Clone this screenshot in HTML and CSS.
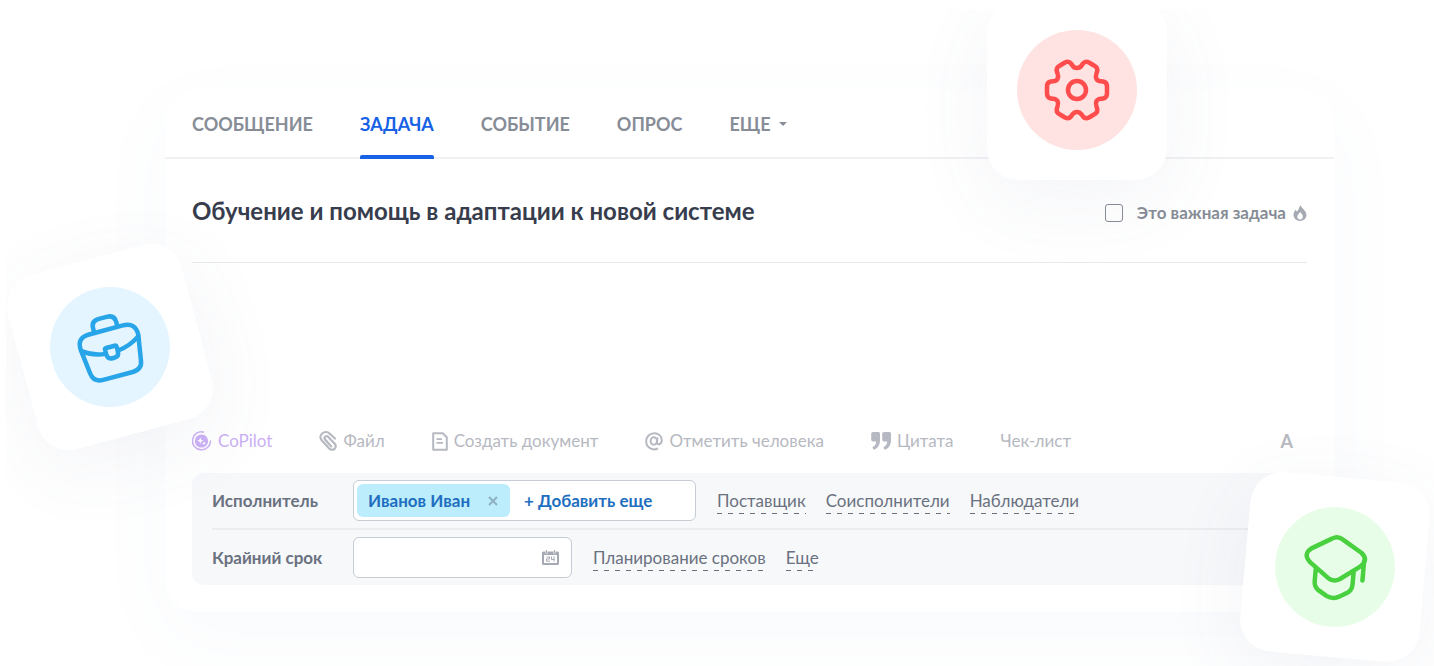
FILE: index.html
```html
<!DOCTYPE html>
<html lang="ru">
<head>
<meta charset="utf-8">
<title>Новая задача</title>
<link rel="stylesheet" href="styles.css">
</head>
<body>
<div class="scene">
  <main class="card">
    <nav class="tabs">
      <button class="tab" type="button">СООБЩЕНИЕ</button>
      <button class="tab tab-active" type="button">ЗАДАЧА</button>
      <button class="tab" type="button">СОБЫТИЕ</button>
      <button class="tab" type="button">ОПРОС</button>
      <button class="tab" type="button">ЕЩЕ <svg class="caret" width="8" height="4" viewBox="0 0 8 4"><path d="M0 0h8L4 4z"/></svg></button>
    </nav>
    <form class="task">
      <header class="task-head">
        <h1 class="title">Обучение и помощь в адаптации к новой системе</h1>
        <label class="important"><input class="check" type="checkbox">Это важная задача
          <svg class="flame" width="14" height="16" viewBox="0 0 14 16"><path fill-rule="evenodd" d="M7.500 0C8 3 13.500 5.500 13.500 10a6.500 6 0 0 1-13 0C.5 8 1.500 6 2.800 4.800 3 6 3.500 6.500 4.200 6.500 5.500 5 6 2.500 7.500 0zM7.200 6.800C6.500 8.600 4.300 9.400 4.300 11.600a2.800 2.800 0 0 0 5.600 0C9.900 9.600 8 8.800 7.200 6.800z"/></svg>
        </label>
      </header>
      <textarea class="description" aria-label="Описание задачи"></textarea>
      <div class="tools">
        <button class="tool tool-copilot" type="button">
          <svg width="20" height="20" viewBox="0 0 20 20"><circle cx="9.500" cy="10" r="6.600" fill="currentColor"/><path d="M12 1.200A9 9 0 1 0 18.500 9.500" fill="none" stroke="currentColor" stroke-width="1.500"/><path d="M8.300 6.500l.9 2.300 2.300.9-2.300.9-.9 2.300-.9-2.300-2.300-.9 2.300-.9zM12 10.300l.6 1.400 1.400.6-1.400.6-.6 1.400-.6-1.400-1.400-.6 1.400-.6z" fill="#fff"/></svg>
          CoPilot</button>
        <button class="tool" type="button">
          <svg width="18" height="20" viewBox="0 0 18 20"><path d="M16 7.500L10.800 2.700C8.600.7 5.400.6 3.200 2.500S.9 7.200 2.700 9.300l7.500 8.100c1.500 1.600 3.900 1.700 5.400.4s1.500-3.600.1-5.100L9.300 5.900c-.9-.9-2.200-1-3.100-.2s-.9 2-.1 2.900l6.200 6.800" fill="none" stroke="currentColor" stroke-width="2.200" stroke-linecap="round"/></svg>
          Файл</button>
        <button class="tool" type="button">
          <svg width="16" height="19" viewBox="0 0 16 19"><path d="M1.200 1.200h9.600l4 4v12.600H1.200z" fill="none" stroke="currentColor" stroke-width="2" stroke-linejoin="round"/><path d="M4.500 7.200h5.500M4.500 10.800h6.500" stroke="currentColor" stroke-width="1.800"/></svg>
          Создать документ</button>
        <button class="tool" type="button">
          <svg width="18" height="19" viewBox="0 0 18 19"><g fill="none" stroke="currentColor" stroke-width="2"><ellipse cx="8.800" cy="9" rx="3.200" ry="3.700"/><path d="M12.500 5.300l-.6 5c-.2 3 4.900 2.700 4.900-2.100C16.800 4 13.500 1.200 9.300 1.200 4.700 1.200 1.200 4.700 1.200 9.300c0 6.200 6 9.800 11.700 7.200"/></g></svg>
          Отметить человека</button>
        <button class="tool" type="button">
          <svg width="20" height="18" viewBox="0 0 20 18"><path d="M2 0h5.500a1.500 1.500 0 0 1 1.500 1.500V8c0 5-2.200 8.600-6.600 9.800L1.500 15c2.300-1 3.600-2.500 3.700-5.500H2A1.800 1.800 0 0 1 .2 7.700V1.800A1.800 1.800 0 0 1 2 0zM13 0h5.500A1.500 1.500 0 0 1 20 1.500V8c0 5-2.200 8.600-6.600 9.800l-.9-2.800c2.300-1 3.600-2.500 3.700-5.500H13a1.800 1.800 0 0 1-1.800-1.800V1.800A1.800 1.800 0 0 1 13 0z" fill="currentColor"/></svg>
          Цитата</button>
        <button class="tool" type="button">Чек-лист</button>
        <button class="tool tool-format" type="button">A</button>
      </div>
      <div class="panel">
        <div class="row">
          <label class="row-label" for="add">Исполнитель</label>
          <div class="people">
            <span class="chip">Иванов Иван
              <button class="chip-close" type="button" aria-label="Удалить"><svg width="10" height="10" viewBox="0 0 10 10"><path d="M1 1l8 8M9 1L1 9" stroke="currentColor" stroke-width="2"/></svg></button>
            </span>
            <button class="add" id="add" type="button">+ Добавить еще</button>
          </div>
          <div class="links"><a class="link" href="#">Поставщик</a><a class="link" href="#">Соисполнители</a><a class="link" href="#">Наблюдатели</a></div>
        </div>
        <div class="row">
          <label class="row-label" for="due">Крайний срок</label>
          <div class="date">
            <input class="date-input" id="due" type="text">
            <svg width="17" height="15" viewBox="0 0 17 15"><path d="M1.500 1.500h2v2h2v-2h6v2h2v-2h2A1.500 1.500 0 0 1 17 3v10.500a1.500 1.500 0 0 1-1.500 1.500h-14A1.500 1.500 0 0 1 0 13.500V3a1.500 1.500 0 0 1 1.500-1.500zM2 5v8h13V5z" fill="currentColor" fill-rule="evenodd"/><path d="M4 0h1v3H4zM12 0h1v3h-1z" fill="currentColor"/><path d="M4.500 7h3v2h-3v2.200H8M9.500 6.500v3h3M12 6.500v5" fill="none" stroke="currentColor" stroke-width="1"/></svg>
          </div>
          <div class="links"><a class="link" href="#">Планирование сроков</a><a class="link" href="#">Еще</a></div>
        </div>
      </div>
    </form>
  </main>
  <div class="tile tile-gear">
    <svg viewBox="0 0 120 120"><circle cx="60" cy="60" r="60" fill="#ffe2e2"/><g fill="none" stroke="#ff4d4d" stroke-width="4.500" stroke-linejoin="round"><circle cx="60" cy="60" r="9"/><path d="M54 33.500C56 36 56 38 60 38S64 36 66 33.500C68 31 70 31.500 72 32.500L77 35.500C80 37 81 39 80 42C79 45 78 46 79.500 49C81.500 52 83 51 86 51.500C89 52 90 54 90 56.500V63.500C90 66 89 68 86 68.500C83 69 81.500 68 79.500 71C78 74 79 75 80 78C81 81 80 83 77 84.500L72 87.500C70 88.500 68 89 66 86.500C64 84 64 82 60 82S56 84 54 86.500C52 89 50 88.500 48 87.500L43 84.500C40 83 39 81 40 78C41 75 42 74 40.500 71C38.500 68 37 69 34 68.500C31 68 30 66 30 63.500V56.500C30 54 31 52 34 51.500C37 51 38.500 52 40.500 49C42 46 41 45 40 42C39 39 40 37 43 35.500L48 32.500C50 31.500 52 31 54 33.500Z"/></g></svg>
  </div>
  <div class="tile tile-case">
    <svg viewBox="0 0 120 120"><circle cx="60" cy="60" r="60" fill="#e4f5ff"/><g fill="none" stroke="#27a5e8" stroke-width="4.500" stroke-linejoin="round" stroke-linecap="round"><path d="M43 42.500h35q13 0 12.500 13l-4 25q-1 9.500-11 9.500H45q-10 0-11-9.500l-3-25q-1-13 12-13z"/><path d="M48.500 41.500v-4q0-7.500 8-7.500h8q8 0 8 7.500v4M32 57q9 7 22 8.500M90 57q-10 7-23 8.500"/><path d="M56 60h9q1.500 0 1.500 1.500V66q0 5.500-5 5.500h-2q-5 0-5-5.500v-4.500q0-1.500 1.500-1.500z"/></g></svg>
  </div>
  <div class="tile tile-cap">
    <svg viewBox="0 0 120 120"><circle cx="60" cy="60" r="60" fill="#e8fde8"/><g fill="none" stroke="#48d03e" stroke-width="4.500" stroke-linejoin="round" stroke-linecap="round"><path d="M54.500 32q5.500-3.500 11 0L85 43.500q8.500 6.500 0 14L66 71.500q-6 4-12 0L35 57.500q-8.500-7.500 0-14zM41 63v13q0 5.500 4.500 8.500l8.500 5q6 3 12 0l8.500-5q4.500-3 4.500-8.500V62M88.500 51v20"/></g></svg>
  </div>
</div>
</body>
</html>
```
FILE: styles.css
```css
* { box-sizing: border-box; }
body { margin: 0; background: #fff; font-family: Lato, "Noto Sans", sans-serif; font-size: 17px; line-height: 24px; color: #6a7180; }
button, input, textarea { font: inherit; color: inherit; border: 0; background: none; padding: 0; margin: 0; }
svg { flex: none; display: block; }
.scene { position: relative; overflow: hidden; margin: 9px 0 0 6px; padding: 81px 100px 54px 159px; }
.card { background: #fff; border-radius: 32px; box-shadow: 0 24px 80px rgba(80, 120, 170, .04); }
.tabs { display: flex; gap: 47px; padding: 0 27px; border-bottom: 2px solid #f0f1f3; }
.tab { display: flex; align-items: center; gap: 8px; height: 69px; margin-bottom: -2px; padding-bottom: 2px; font-size: 18px; font-weight: 700; color: #878d97; }
.tab-active { color: #1762e5; position: relative; }
.tab-active::after { content: ""; position: absolute; left: 0; right: 0; bottom: 0; height: 4px; background: #1762e5; border-radius: 2px 2px 0 0; }
.caret { fill: #878d97; }
.task { padding: 0 27px 27px; }
.task-head { display: flex; justify-content: space-between; align-items: center; height: 104px; border-bottom: 1px solid #e9eaed; }
.title { margin: 0; font-size: 24px; line-height: 32px; font-weight: 700; color: #373d4d; }
.important { display: flex; align-items: center; gap: 7px; padding-top: 4px; font-weight: 700; color: #878d97; }
.check { appearance: none; width: 18px; height: 18px; margin-right: 7px; border: 1px solid #878d97; border-radius: 3px; }
.flame { fill: #a5a9b1; }
.description { display: block; width: 100%; height: 157px; resize: none; }
.tools { display: flex; align-items: center; gap: 47px; height: 42px; margin-bottom: 11px; }
.tool { display: flex; align-items: center; gap: 6px; color: #b6b9c1; }
.tool-copilot { color: #ccb0f5; }
.tool-format { margin-left: auto; margin-right: 14px; font-size: 18px; font-weight: 700; }
.panel { padding: 0 0 0 20px; background: #f7f8fa; border-radius: 12px; }
.row { display: flex; align-items: center; height: 55px; }
.row + .row { border-top: 2px solid #ebedf0; height: 57px; }
.row-label { width: 141px; font-weight: 700; }
.people, .date { display: flex; align-items: center; height: 41px; padding: 3px; background: #fff; border: 1px solid #c6cbd4; border-radius: 6px; }
.people { width: 343px; gap: 14px; }
.date { width: 219px; padding-right: 12px; color: #a5a9b1; }
.date-input { flex: 1; min-width: 0; height: 100%; }
.chip { display: flex; align-items: center; gap: 18px; height: 33px; padding: 0 12px 0 11px; background: #bcedfc; border-radius: 6px; font-weight: 700; color: #1f6fc0; }
.chip-close { color: #8fb0c0; }
.add { font-weight: 700; color: #1f6fc0; }
.links { display: flex; gap: 20px; margin-left: 21px; }
.link { padding: 2px 0 1px; color: inherit; text-decoration: none; background: repeating-linear-gradient(90deg, #6a7180 0 5px, transparent 5px 11px) bottom left / 100% 1px no-repeat; }
.tile { position: absolute; display: grid; place-items: center; width: 180px; height: 180px; background: #fff; border-radius: 32px; box-shadow: 0 20px 80px rgba(80, 100, 140, .07); }
.tile svg { width: 120px; height: 120px; }
.tile-gear { top: -9px; right: 267px; }
.tile-case { top: 248px; left: 14px; transform: rotate(-15deg); }
.tile-cap { top: 468px; right: 9px; transform: rotate(5deg); }
```
